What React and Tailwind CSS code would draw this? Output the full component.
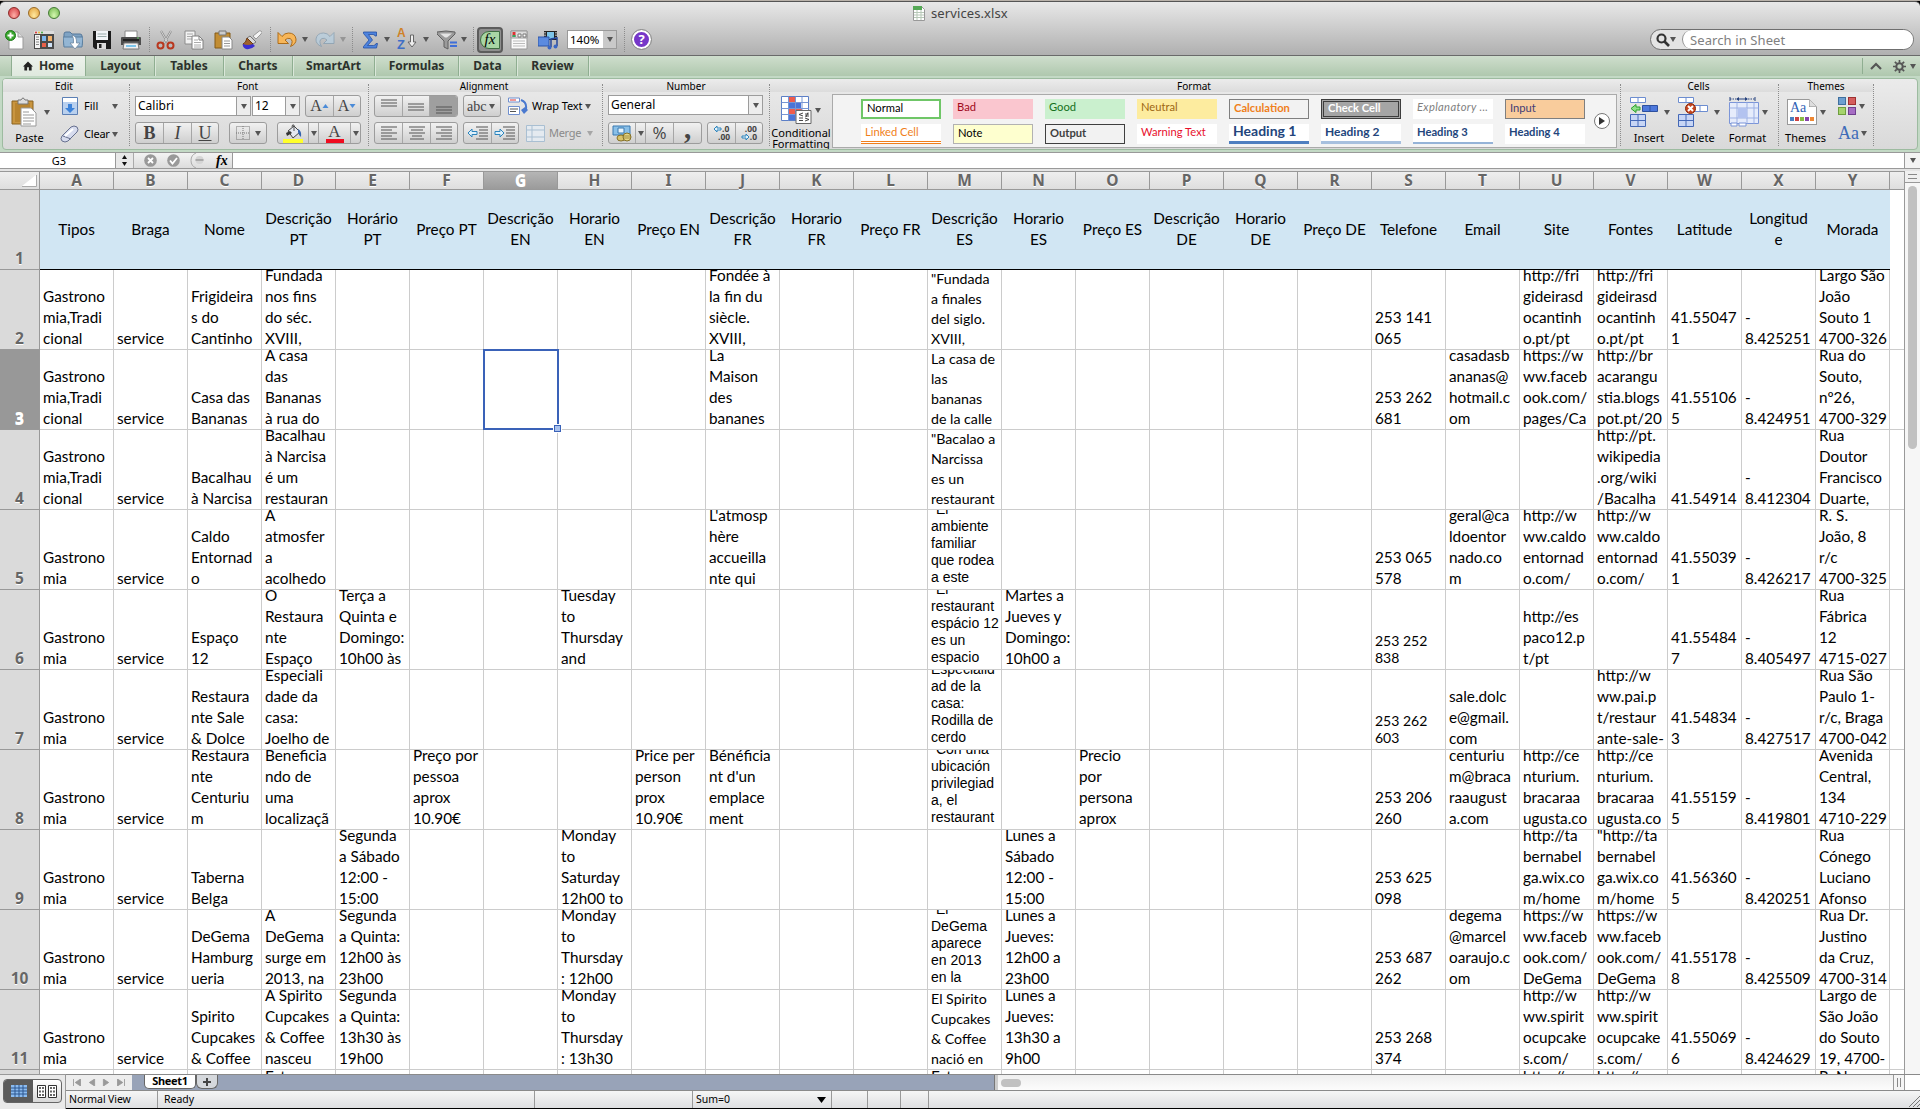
import React from "react";

const COLS = "ABCDEFGHIJKLMNOPQRSTUVWXY".split("");

const TITLES = [
  "Tipos", "Braga", "Nome", "Descrição|PT", "Horário|PT", "Preço PT", "Descrição|EN", "Horario|EN", "Preço EN",
  "Descrição|FR", "Horario|FR", "Preço FR", "Descrição|ES", "Horario|ES", "Preço ES", "Descrição|DE", "Horario|DE",
  "Preço DE", "Telefone", "Email", "Site", "Fontes", "Latitude", "Longitud|e", "Morada",
];

const ROWS = [
  {
    A: "Gastrono|mia,Tradi|cional", B: "service", C: "Frigideira|s do|Cantinho", D: "Fundada|nos fins|do séc.|XVIII,",
    J: "Fondée à|la fin du|siècle.|XVIII,", M: '"Fundada|a finales|del siglo.|XVIII,', S: "253 141|065",
    U: "http://fri|gideirasd|ocantinh|o.pt/pt", V: "http://fri|gideirasd|ocantinh|o.pt/pt", W: "41.55047|1", X: "-|8.425251",
    Y: "Largo São|João|Souto 1|4700-326",
  },
  {
    A: "Gastrono|mia,Tradi|cional", B: "service", C: "Casa das|Bananas", D: "A casa|das|Bananas|à rua do",
    J: "La|Maison|des|bananes", M: "La casa de|las|bananas|de la calle", S: "253 262|681", T: "casadasb|ananas@|hotmail.c|om",
    U: "https://w|ww.faceb|ook.com/|pages/Ca", V: "http://br|acarangu|stia.blogs|pot.pt/20", W: "41.55106|5", X: "-|8.424951",
    Y: "Rua do|Souto,|nº26,|4700-329",
  },
  {
    A: "Gastrono|mia,Tradi|cional", B: "service", C: "Bacalhau|à Narcisa", D: "Bacalhau|à Narcisa|é um|restauran",
    M: '"Bacalao a|Narcissa|es un|restaurant', V: "http://pt.|wikipedia|.org/wiki|/Bacalha", W: "41.54914", X: "-|8.412304",
    Y: "Rua|Doutor|Francisco|Duarte,",
  },
  {
    A: "Gastrono|mia", B: "service", C: "Caldo|Entornad|o", D: "A|atmosfer|a|acolhedo", J: "L'atmosp|hère|accueilla|nte qui",
    M: '"El|ambiente|familiar|que rodea|a este', S: "253 065|578", T: "geral@ca|ldoentor|nado.co|m",
    U: "http://w|ww.caldo|entornad|o.com/", V: "http://w|ww.caldo|entornad|o.com/", W: "41.55039|1", X: "-|8.426217",
    Y: "R. S.|João, 8|r/c|4700-325",
  },
  {
    A: "Gastrono|mia", B: "service", C: "Espaço|12", D: "O|Restaura|nte|Espaço", E: "Terça a|Quinta e|Domingo:|10h00 às",
    H: "Tuesday|to|Thursday|and", M: '"El|restaurant|espácio 12|es un|espacio', N: "Martes a|Jueves y|Domingo:|10h00 a",
    S: "253 252|838", U: "http://es|paco12.p|t/pt", W: "41.55484|7", X: "-|8.405497", Y: "Rua|Fábrica|12|4715-027",
  },
  {
    A: "Gastrono|mia", B: "service", C: "Restaura|nte Sale|& Dolce", D: "Especiali|dade da|casa:|Joelho de",
    M: "Especialid|ad de la|casa:|Rodilla de|cerdo", S: "253 262|603", T: "sale.dolc|e@gmail.|com",
    V: "http://w|ww.pai.p|t/restaur|ante-sale-", W: "41.54834|3", X: "-|8.427517", Y: "Rua São|Paulo 1-|r/c, Braga|4700-042",
  },
  {
    A: "Gastrono|mia", B: "service", C: "Restaura|nte|Centuriu|m", D: "Beneficia|ndo de|uma|localizaçã",
    F: "Preço por|pessoa|aprox|10.90€", I: "Price per|person|prox|10.90€", J: "Bénéficia|nt d'un|emplace|ment",
    M: '"Con una|ubicación|privilegiad|a, el|restaurant', O: "Precio|por|persona|aprox", S: "253 206|260",
    T: "centuriu|m@braca|raaugust|a.com", U: "http://ce|nturium.|bracaraa|ugusta.co", V: "http://ce|nturium.|bracaraa|ugusta.co",
    W: "41.55159|5", X: "-|8.419801", Y: "Avenida|Central,|134|4710-229",
  },
  {
    A: "Gastrono|mia", B: "service", C: "Taberna|Belga", E: "Segunda|a Sábado|12:00 -|15:00", H: "Monday|to|Saturday|12h00 to",
    N: "Lunes a|Sábado|12:00 -|15:00", S: "253 625|098", U: "http://ta|bernabel|ga.wix.co|m/home", V: '"http://ta|bernabel|ga.wix.co|m/home',
    W: "41.56360|5", X: "-|8.420251", Y: "Rua|Cónego|Luciano|Afonso",
  },
  {
    A: "Gastrono|mia", B: "service", C: "DeGema|Hamburg|ueria", D: "A|DeGema|surge em|2013, na", E: "Segunda|a Quinta:|12h00 às|23h00",
    H: "Monday|to|Thursday|: 12h00", M: '"El|DeGema|aparece|en 2013|en la', N: "Lunes a|Jueves:|12h00 a|23h00",
    S: "253 687|262", T: "degema|@marcel|oaraujo.c|om", U: "https://w|ww.faceb|ook.com/|DeGema", V: "https://w|ww.faceb|ook.com/|DeGema",
    W: "41.55178|8", X: "-|8.425509", Y: "Rua Dr.|Justino|da Cruz,|4700-314",
  },
  {
    A: "Gastrono|mia", B: "service", C: "Spirito|Cupcakes|& Coffee", D: "A Spirito|Cupcakes|& Coffee|nasceu", E: "Segunda|a Quinta:|13h30 às|19h00",
    H: "Monday|to|Thursday|: 13h30", M: "El Spirito|Cupcakes|& Coffee|nació en", N: "Lunes a|Jueves:|13h30 a|9h00",
    S: "253 268|374", U: "http://w|ww.spirit|ocupcake|s.com/", V: "http://w|ww.spirit|ocupcake|s.com/", W: "41.55069|6", X: "-|8.424629",
    Y: "Largo de|São João|do Souto|19, 4700-",
  },
];

const PEEK = { D: "Estamos", M: "Estamos", U: "http://w", V: "http://w", Y: "R. Nova" };

const CALIBRI = "font-['Lato',sans-serif] text-[15.3px] leading-[21px]";
const CALIBRI_SMALL = "font-['Lato',sans-serif] text-[14.2px] leading-[20px]";
const ARIAL = "font-['Liberation_Sans',Arial,sans-serif] text-[14px] leading-[17px] pb-[3px]";
const PHONE_SMALL = "font-['Lato',sans-serif] text-[14px] leading-[17px] pb-[3px]";

function cellFont(col, rowNo) {
  if (col === "M") return [5, 6, 7, 8, 10].includes(rowNo) ? ARIAL : CALIBRI_SMALL;
  if (col === "S" && (rowNo === 6 || rowNo === 7)) return PHONE_SMALL;
  return CALIBRI;
}

const Lines = ({ text }) => text.split("|").map((l, i) => <div key={i}>{l}</div>);

const Arrow = ({ className = "" }) => (
  <svg viewBox="0 0 6 5" className={"h-[5px] w-[6px] shrink-0 " + className}><path d="M0 0h6L3 5z" fill="#555" /></svg>
);
const Dots = ({ className = "" }) => <div className={"shrink-0 border-l border-dotted border-[#8c8c8c] " + className} />;
const Pic = ({ className = "", box = "0 0 20 20", children }) => (
  <svg viewBox={box} className={"shrink-0 " + className} fill="none">{children}</svg>
);

/* ---------- standard toolbar ---------- */

function Toolbar() {
  const s = "h-5 w-5 ";
  return (
    <div className="flex h-[31px] items-center">
      <Pic className={s + "ml-[5px]"}>
        <path d="M4 2h9l5 5v12H4z" fill="#fdfdfd" stroke="#999" /><path d="M13 2v5h5" fill="#ddd" stroke="#999" />
        <circle cx="5.5" cy="5.5" r="5" fill="#38a52c" stroke="#1d7a18" /><path d="M5.500 2.500v6M2.500 5.500h6" stroke="#fff" strokeWidth="2" />
      </Pic>
      <Pic className={s + "ml-[9px]"}>
        <path d="M0 1h20v18H0z" fill="#4a4a4a" /><path d="M0 1h20v3H0z" fill="#ddd" />
        <circle cx="2" cy="2.500" r="1" fill="#d33" /><circle cx="5" cy="2.500" r="1" fill="#eb3" /><circle cx="8" cy="2.500" r="1" fill="#4a4" />
        <path d="M1 5h5v13H1z" fill="#f4f4f4" /><path d="M2 7h3M2 9.500h3M2 12h3M2 14.500h3" stroke="#888" />
        <path d="M8 6h4v5H8z" fill="#7db8f0" /><path d="M14 6h4v5h-4z" fill="#f3b26b" /><path d="M8 13h4v4H8z" fill="#e9604a" /><path d="M14 13h4v4h-4z" fill="#cfe3f8" />
      </Pic>
      <Pic className={s + "ml-[9px]"}>
        <path d="M1 4q0-2 2-2h4l2 2h8q2 0 2 2v9H1z" fill="#7fa3c4" stroke="#56789a" /><path d="M0 7h20l-1 10H1z" fill="#94b6d4" stroke="#5b7f9f" />
        <path d="M9 5q5 1 4.500 8H17l-5 6-5-6h3.500Q11 8 9 5z" fill="#fff" stroke="#6d87a0" strokeWidth=".8" />
      </Pic>
      <Pic className={s + "ml-[9px]"}>
        <path d="M1 1h18v18H3l-2-2z" fill="#1b1b1b" /><path d="M4 1h12v9H4z" fill="#f3f5f8" /><path d="M5.500 4h9M5.500 6.500h9" stroke="#9aa" />
        <path d="M5 13h9v6H5z" fill="#dcdcdc" /><path d="M7 14h2.500v4H7z" fill="#222" />
      </Pic>
      <Pic className={s + "ml-[9px]"}>
        <path d="M4 1h12v8H4z" fill="#fff" stroke="#888" /><path d="M0 8q0-1 1-1h18q1 0 1 1v7H0z" fill="#4d4d4d" /><path d="M2 9h16v2H2z" fill="#222" />
        <path d="M3 13h14l1 6H2z" fill="#f1f1f1" stroke="#777" /><path d="M5 16h10" stroke="#56b6e8" strokeWidth="1.500" /><circle cx="17" cy="8" r=".8" fill="#6d6" />
      </Pic>
      <Dots className="ml-[8px] h-[25px]" />
      <Pic className={s + "ml-[6px]"}>
        <path d="M5 1l7.500 13M15 1L7.500 14" stroke="#888" strokeWidth="2.200" /><path d="M5 1l7.500 13M15 1L7.500 14" stroke="#e9e9e9" strokeWidth=".8" />
        <circle cx="4.500" cy="15.500" r="3" stroke="#b9381f" strokeWidth="2" /><circle cx="14.500" cy="15.500" r="3" stroke="#b9381f" strokeWidth="2" />
      </Pic>
      <Pic className={s + "ml-[8px]"}>
        <path d="M1 1h10v13H1z" fill="#f2f2f2" stroke="#8c8c8c" /><path d="M3 4h6M3 6.500h6M3 9h6" stroke="#aaa" />
        <path d="M8 6h7l4 4v9H8z" fill="#fff" stroke="#808080" /><path d="M10 10h4M10 12.500h7M10 15h7M10 17h7" stroke="#aaa" /><path d="M15 6v4h4" stroke="#808080" />
      </Pic>
      <Pic className={s + "ml-[10px]"}>
        <path d="M1 3h15v15H1z" fill="#c28d33" stroke="#845b17" /><path d="M5 1h7v4H5z" fill="#ccc" stroke="#777" />
        <path d="M8 7h7l3 3v9H8z" fill="#fff" stroke="#888" /><path d="M10 11h6M10 13.500h6M10 16h6" stroke="#999" />
      </Pic>
      <Pic className={s + "ml-[8px]"}>
        <path d="M19 1q2 1 0 3l-5 5-3-3 5-4q2-2 3-1z" fill="#f4f4f4" stroke="#999" /><path d="M8 6l6 6-3 2-6-6z" fill="#d9d9d9" stroke="#777" />
        <path d="M5 8l6 6q-3 4-7 2-3 0-3-2 3-1 4-6z" fill="#a0622b" stroke="#6b3a12" /><path d="M1 14q5 2 10 0l2 2q-4 4-9 3-4-2-3-5z" fill="#3a2fd0" />
      </Pic>
      <Dots className="ml-[8px] h-[25px]" />
      <Pic className={s + "ml-[6px]"}>
        <path d="M1 2.500v11h10.500L8 10q2.500-2.500 5-1.500 4 2 .5 8 6-2.500 5.500-7.500Q18 3 11.500 3 7.500 3 5 6.500z" fill="#f7b659" stroke="#a8640e" strokeWidth=".9" />
      </Pic>
      <Arrow className="ml-[5px]" />
      <Pic className={s + "ml-[7px] opacity-60"}>
        <path d="M19 2.500v11H8.500L12 10q-2.500-2.500-5-1.500-4 2-.5 8Q.5 14 1 9 2 3 8.500 3q4 0 6.500 3.500z" fill="#b6d3e8" stroke="#7292ac" strokeWidth=".9" />
      </Pic>
      <Arrow className="ml-[5px] opacity-40" />
      <Dots className="ml-[6px] h-[25px]" />
      <Pic className={s + "ml-[7px]"}>
        <path d="M3.500 2h13v4h-1.500q0-1.500-2-1.500H8.500L12.500 10l-5 5.500h6q2 0 2.500-2h1.500l-1 4.500H3.500v-1.500L9 10 3.500 3.500z" fill="#4e83dd" stroke="#2450a4" strokeWidth=".8" />
      </Pic>
      <Arrow className="ml-[4px]" />
      <div className="relative ml-[7px] h-5 w-5">
        <div className="absolute -top-[3px] left-0 font-['Liberation_Sans'] text-[12px] font-bold leading-[13px] text-[#cf8128]">A</div>
        <div className="absolute top-[8px] left-0 font-['Liberation_Sans'] text-[13px] font-bold leading-[13px] text-[#3f6fc6]">Z</div>
        <svg viewBox="0 0 10 14" className="absolute top-[4px] right-0 h-[14px] w-[10px]"><path d="M3.500 1h3v7H9l-4 5-4-5h2.500z" fill="#eee" stroke="#666" /></svg>
      </div>
      <Arrow className="ml-[6px]" />
      <Pic className={s + "ml-[8px]"}>
        <path d="M0 2q9-2 18 0v2l-7 7v8l-4-2v-6L0 4z" fill="#9b9b9b" stroke="#606060" /><path d="M3 3.500h12l-5 4H8z" fill="#e4e4e4" /><path d="M13 12.500h7M13 16h7" stroke="#3f6fd8" strokeWidth="2" />
      </Pic>
      <Arrow className="ml-[4px]" />
      <Dots className="ml-[6px] h-[25px]" />
      <div className="ml-[3px] flex h-[26px] w-[26px] shrink-0 items-center justify-center rounded-[4px] border-2 border-[#5c5c5c] bg-[#8f8f8f]">
        <div className="flex h-[18px] w-[20px] items-center justify-center rounded-l-full rounded-r-[2px] border border-[#3f6d42] bg-[#a9d6a5] font-['Liberation_Serif'] text-[15px] italic leading-none text-black">fx</div>
      </div>
      <Pic className={s + "ml-[6px]"}>
        <path d="M2 1h16v18H2z" fill="#fafafa" stroke="#999" /><path d="M2 1h16v7H2z" fill="#ddd" stroke="#999" /><path d="M3.500 2h3v5h-3z" fill="#d33" /><path d="M3.500 5h3v2h-3z" fill="#3a6" />
        <path d="M9 4h3v3H9zM14 4h3v3h-3z" fill="#fff" stroke="#777" /><path d="M4 11h12M4 13.500h12M4 16h12" stroke="#bbb" />
      </Pic>
      <Pic className={s + "ml-[9px]"}>
        <path d="M6 1h13v9H6z" fill="#222" /><path d="M9 2h7v7H9z" fill="#7dc4e8" /><path d="M7 2v7M18 2v7" stroke="#fff" strokeDasharray="1.500 1" />
        <path d="M0 7h11v9H0z" fill="#5b8be0" stroke="#2c55a8" /><path d="M13 17V9l6-1v8" stroke="#24479b" strokeWidth="1.500" /><circle cx="11.500" cy="17.500" r="2" fill="#3966c4" /><circle cx="17.500" cy="16.500" r="2" fill="#3966c4" />
      </Pic>
      <div className="ml-[9px] flex h-[19px] w-[50px] shrink-0 border border-[#9a9a9a] bg-white">
        <div className="w-[35px] pl-[2px] text-[11.5px] leading-[18px] text-black">140%</div>
        <div className="flex flex-1 items-center justify-center bg-[#c9c9c9]"><Arrow /></div>
      </div>
      <Dots className="ml-[7px] h-[25px]" />
      <div className="ml-[7px] flex h-[19px] w-[19px] shrink-0 items-center justify-center rounded-full border-2 border-white bg-[#7637c8] text-[13px] font-bold leading-none text-white outline outline-[#8a8a8a]">?</div>
      <div className="ml-auto mr-[6px] flex h-[21px] w-[264px] shrink-0 rounded-full border border-[#6f6f6f] bg-[#e4e4e4]">
        <div className="flex w-[31px] items-center pl-[5px]">
          <Pic className="h-[14px] w-[14px]" box="0 0 14 14"><circle cx="5.500" cy="5.500" r="4" stroke="#333" strokeWidth="2.200" /><path d="M8.500 8.500l4.500 4.500" stroke="#333" strokeWidth="2.600" /></Pic>
          <Arrow />
        </div>
        <div className="flex-1 rounded-full border-l border-[#8f8f8f] bg-white pl-[7px] text-[13px] leading-[20px] tracking-[0.1px] text-[#808080]">Search in Sheet</div>
      </div>
    </div>
  );
}

/* ---------- ribbon ---------- */

const TABS = [
  ["Layout", "w-[69px] tracking-[-0.1px] pl-[1px]"], ["Tables", "w-[69px]"], ["Charts", "w-[69px]"], ["SmartArt", "w-[82px]"],
  ["Formulas", "w-[84px]"], ["Data", "w-[58px]"], ["Review", "w-[72px]"],
];

function Tabs() {
  return (
    <div className="flex h-[20px] bg-gradient-to-b from-[#cfdecd] to-[#afc8ae] text-[12px] font-bold leading-[20px] text-[#2c322c]">
      <div className="w-[12px] border-r border-[#8fae91]" />
      <div className="flex w-[74px] items-center border-r border-[#8fae91] bg-gradient-to-b from-[#eef3ed] to-[#dfe9de] pl-[11px]">
        <Pic className="mr-[6px] h-[10px] w-[10px]" box="0 0 11 10"><path d="M5.500 0L11 5.500H9.500V10h-3V6.500h-2V10h-3V5.500H0z" fill="#222" /></Pic><span className="tracking-[-0.2px]">Home</span>
      </div>
      {TABS.map(([t, w]) => <div key={t} className={"border-r border-[#8fae91] text-center shadow-[1px_0_0_#dbe7da] " + w}>{t}</div>)}
      <div className="ml-auto flex items-center">
        <div className="h-[16px] border-l border-[#8fae91]" />
        <Pic className="ml-[7px] h-[8px] w-[12px]" box="0 0 12 8"><path d="M1 7l5-5 5 5" stroke="#555" strokeWidth="2.200" /></Pic>
        <Pic className="ml-[11px] h-[13px] w-[13px]" box="0 0 14 14">
          <circle cx="7" cy="7" r="3.500" stroke="#555" strokeWidth="2.200" /><path d="M7 0v3M7 11v3M0 7h3M11 7h3M2 2l2 2M10 10l2 2M12 2l-2 2M4 10l-2 2" stroke="#555" strokeWidth="1.800" />
        </Pic>
        <Arrow className="ml-[4px] mr-[4px]" />
      </div>
    </div>
  );
}

const Group = ({ title, className, children }) => (
  <div className={"flex shrink-0 flex-col " + className}>
    <div className="h-[13px] bg-gradient-to-b from-[#ececec] to-[#dcdcdc] text-center text-[10px] leading-[14px] text-black">{title}</div>
    {children}
  </div>
);
const Sep = () => <Dots className="mt-[5px] h-[62px]" />;
const BTN = "flex h-[22px] shrink-0 items-center rounded-[3px] border border-[#9c9c9c] bg-gradient-to-b from-[#f1f1f1] to-[#cfcfcf] text-[#444]";
const SEG = "flex h-full shrink-0 items-center justify-center border-l border-[#a6a6a6] ";

const Align = ({ kind }) => {
  const shapes = {
    top: "M4 2h16M4 5h16M4 8h16", mid: "M4 6h16M4 9h16M4 12h16", bot: "M4 9h16M4 12h16M4 15h16",
    left: "M4 2h16M4 5h11M4 8h16M4 11h11M4 14h16", center: "M4 2h16M6 5h12M4 8h16M7 11h10M5 14h14", right: "M4 2h16M9 5h11M4 8h16M9 11h11M4 14h16",
  };
  return <Pic className="h-[16px] w-[24px]" box="0 0 24 16"><path d={shapes[kind]} stroke="#555" strokeWidth="1.200" /></Pic>;
};

const Indent = ({ out }) => (
  <Pic className="h-[14px] w-[22px]" box="0 0 22 14">
    <path d="M9 1h12M12 4h9M12 7h9M12 10h9M9 13h12" stroke="#555" strokeWidth="1.200" />
    <path d={out ? "M1 7l4-4v2.500h5v3H5V11z" : "M10 7L6 3v2.500H1v3h5V11z"} fill="#dff1fb" stroke="#2c84bd" />
  </Pic>
);

const Select = ({ text, className, arrow }) => (
  <div className={"flex h-[20px] shrink-0 border border-[#9c9c9c] bg-white text-[12px] leading-[18px] text-black " + className}>
    <div className="flex-1 pl-[2px]">{text}</div>
    <div className={"flex items-center justify-center border-l border-[#9c9c9c] bg-[#ededed] " + arrow}><Arrow /></div>
  </div>
);

const EditGroup = () => (
  <Group title={<span className="-ml-[4px]">Edit</span>} className="w-[126px]">
    <div className="flex">
      <div className="w-[54px] pl-[8px] pt-[5px]">
        <div className="flex items-center">
          <Pic className="h-[30px] w-[26px]" box="0 0 26 30">
            <path d="M1 4h21v23H1z" fill="#c9953f" stroke="#8a621e" /><path d="M4 6h15v19H4z" fill="#b8842f" /><path d="M7 3h3q2-4 4 0h3v4H7z" fill="#ddd" stroke="#777" />
            <path d="M10 11h10l5 5v13H10z" fill="#fff" stroke="#999" /><path d="M12 15h6M12 18h11M12 21h11M12 24h11M12 27h8" stroke="#999" />
          </Pic>
          <Arrow className="ml-[7px]" />
        </div>
        <div className="mt-[3px] w-[37px] text-center text-[11px] leading-[16px]">Paste</div>
      </div>
      <div className="pt-[3px] text-[11px]">
        <div className="flex h-[22px] items-center">
          <Pic className="ml-[5px] h-[18px] w-[16px]" box="0 0 16 18"><path d="M.5.5h15v17H.5z" fill="#b9d0ee" stroke="#5b7fb5" /><path d="M1 1h14v4H1z" fill="#fff" /><path d="M6 7h4v4h3l-5 5-5-5h3z" fill="#3d82d8" /></Pic>
          <div className="ml-[6px] w-[28px]">Fill</div><Arrow />
        </div>
        <div className="mt-[6px] flex h-[22px] items-center">
          <Pic className="ml-[3px] h-[18px] w-[19px]" box="0 0 19 18"><path d="M2 11L11 2q3-2 6 0 2 3 0 5L8 16q-3 2-6 0-2-2 0-5z" fill="#d7dcee" stroke="#66708f" /><path d="M3 11l8 3" stroke="#66708f" /><path d="M5 11l8-7" stroke="#fff" strokeWidth="2" /></Pic>
          <div className="ml-[5px] w-[28px] tracking-[-0.2px]">Clear</div><Arrow />
        </div>
      </div>
    </div>
  </Group>
);

const FontGroup = () => (
  <Group title={<span className="-ml-[3px]">Font</span>} className="w-[238px]">
    <div className="mt-[4px] flex h-[20px] items-center pl-[5px]">
      <Select text="Calibri" className="w-[116px]" arrow="w-[14px]" />
      <Select text="12" className="ml-[1px] w-[48px]" arrow="w-[14px]" />
      <div className={BTN + " ml-[5px] w-[56px] font-['Liberation_Serif'] text-[16px]"}>
        <div className="flex w-[27px] items-center justify-center">A<svg viewBox="0 0 6 4" className="h-[4px] w-[7px]"><path d="M0 4h6L3 0z" fill="#4a8bd8" /></svg></div>
        <div className={SEG + "w-[27px]"}>A<svg viewBox="0 0 6 4" className="h-[4px] w-[7px]"><path d="M0 0h6L3 4z" fill="#4a8bd8" /></svg></div>
      </div>
    </div>
    <div className="mt-[6px] flex items-center pl-[5px]">
      <div className={BTN + " w-[84px] font-['Liberation_Serif'] text-[18px]"}>
        <div className="w-[27px] text-center font-bold">B</div><div className={SEG + "w-[28px] italic"}>I</div><div className={SEG + "w-[27px] underline"}>U</div>
      </div>
      <div className={BTN + " ml-[10px] w-[38px]"}>
        <Pic className="ml-[6px] h-[14px] w-[14px]" box="0 0 14 14"><path d="M.5.5h13v13H.5zM7 0v14M0 7h14" stroke="#777" strokeDasharray="1 1" /></Pic><Arrow className="ml-[5px]" />
      </div>
      <div className={BTN + " ml-[10px] w-[84px]"}>
        <div className="flex w-[30px] justify-center">
          <Pic className="h-[19px] w-[20px]" box="0 0 20 19"><path d="M0 15h20v4H0z" fill="#ffff2a" /><path d="M5 7l6-5 6 6-7 6z" fill="#e4e8f0" stroke="#444" /><path d="M11 7V1q-2-1-2 2" stroke="#555" /><path d="M15 5q4 2 3 8-2-1-3-5z" fill="#3463ad" /><path d="M3 9l4-2 2 2-5 3z" fill="#333" /></Pic>
        </div>
        <div className={SEG + "w-[10px]"}><Arrow /></div>
        <div className={SEG + "w-[32px]"}>
          <div className="flex h-[19px] w-[18px] flex-col items-center border-b-4 border-[#f00c20] font-['Liberation_Serif'] text-[17px] leading-[15px]">A</div>
        </div>
        <div className={SEG + "w-[10px]"}><Arrow /></div>
      </div>
    </div>
  </Group>
);

const AlignmentGroup = () => (
  <Group title={<span className="-ml-[3px]">Alignment</span>} className="w-[233px]">
    <div className="mt-[3px] flex h-[22px] items-center pl-[5px]">
      <div className={BTN + " w-[84px] overflow-hidden"}>
        <div className="flex w-[27px] justify-center"><Align kind="top" /></div><div className={SEG + "w-[27px]"}><Align kind="mid" /></div>
        <div className={SEG + "w-[28px] bg-[#9f9f9f]"}><Align kind="bot" /></div>
      </div>
      <div className={BTN + " ml-[5px] w-[38px] pl-[3px] font-['Liberation_Serif'] text-[14px]"}>abc<Arrow className="ml-[3px]" /></div>
      <Pic className="ml-[7px] h-[18px] w-[20px]" box="0 0 20 18">
        <path d="M.5 1h11v4H.5zM.5 9.500h11v8H.5z" fill="#fff" stroke="#6f8fce" /><path d="M2 3h6" stroke="#d33" /><path d="M2 12h8M2 14.500h6" stroke="#555" /><path d="M13 3q6 2 5 9" stroke="#4a79cf" strokeWidth="2" /><path d="M13 13l4-3 3 3-4 4z" fill="#4a79cf" />
      </Pic>
      <div className="ml-[4px] w-[52px] whitespace-nowrap text-[11px] tracking-[-0.1px]">Wrap Text</div><Arrow className="ml-[1px]" />
    </div>
    <div className="mt-[5px] flex items-center pl-[5px]">
      <div className={BTN + " w-[84px]"}>
        <div className="flex w-[27px] justify-center"><Align kind="left" /></div><div className={SEG + "w-[28px]"}><Align kind="center" /></div><div className={SEG + "w-[27px]"}><Align kind="right" /></div>
      </div>
      <div className={BTN + " ml-[5px] w-[56px]"}>
        <div className="flex w-[27px] justify-center"><Indent out /></div><div className={SEG + "w-[27px]"}><Indent /></div>
      </div>
      <Pic className="ml-[7px] h-[17px] w-[19px]" box="0 0 19 17"><path d="M.5.5h18v16H.5zM.5 5h18M.5 12h18M6 .5v16" fill="#e4eaf0" stroke="#a9bfd2" /></Pic>
      <div className="ml-[4px] w-[36px] text-[11px] tracking-[-0.3px] text-[#8a8a8a]">Merge</div><Arrow className="ml-[2px] opacity-40" />
    </div>
  </Group>
);

const NumberGroup = () => (
  <Group title="Number" className="w-[166px]">
    <div className="mt-[3px] pl-[5px]"><Select text="General" className="w-[155px]" arrow="w-[14px]" /></div>
    <div className="mt-[7px] flex pl-[5px]">
      <div className={BTN + " w-[94px]"}>
        <div className="flex w-[26px] justify-center">
          <Pic className="h-[17px] w-[20px]" box="0 0 20 17"><path d="M1 1h17v9H1z" fill="#8ac0e8" stroke="#3878b0" /><path d="M6 3h6v5H6z" fill="#e8f4fb" stroke="#3878b0" /><ellipse cx="9" cy="13" rx="4" ry="3" fill="#d8c26a" stroke="#857026" /><ellipse cx="15" cy="12" rx="4" ry="4" fill="#e6d685" stroke="#857026" /><path d="M11 11h8M11 13h8" stroke="#857026" strokeWidth=".7" /></Pic>
        </div>
        <div className={SEG + "w-[10px]"}><Arrow /></div><div className={SEG + "w-[28px] font-['Open_Sans'] text-[17px]"}>%</div>
        <div className={SEG + "w-[28px] pb-[9px] font-['Liberation_Serif'] text-[29px] font-bold leading-none"}>,</div>
      </div>
      <div className={BTN + " ml-[5px] w-[56px] text-[8.5px] font-bold leading-[8px]"}>
        <div className="w-[27px] pl-[5px]"><div className="flex"><Pic className="h-[8px] w-[9px]" box="0 0 9 8"><path d="M1 4l3-3v2h4v2H4v2z" fill="#e3f3fb" stroke="#2c84bd" /></Pic>.0</div><div className="pl-[5px]">.00</div></div>
        <div className={SEG + "w-[27px]"}><div><div className="pl-[4px]">.00</div><div className="flex"><Pic className="h-[8px] w-[9px]" box="0 0 9 8"><path d="M8 4L5 1v2H1v2h4v2z" fill="#e3f3fb" stroke="#2c84bd" /></Pic>.0</div></div></div>
      </div>
    </div>
  </Group>
);

const STYLES = [
  ["Normal", "border-2 border-[#6fc667] bg-white text-black pl-[3px] !leading-[13px]"],
  ["Bad", "bg-[#fac6cf] text-[#a00a20]"],
  ["Good", "bg-[#caf0ce] text-[#15721d]"],
  ["Neutral", "bg-[#fdec9f] text-[#9d6712]"],
  ["Calculation", "border border-[#7f7f7f] bg-[#f2f2f2] font-bold text-[#f07f1b] pl-[3px]"],
  ["Check Cell", "border-[3px] border-double border-[#3d3d3d] bg-[#a5a5a5] font-bold text-white pl-[1px] !leading-[11px]"],
  ["Explanatory ...", "bg-white italic tracking-[0.35px] text-[#7f7f7f]"],
  ["Input", "border border-[#7f7f7f] bg-[#f9cc9c] text-[#443c76] pl-[3px]"],
  ["Linked Cell", "border-b-[3px] border-double border-[#f07f1b] bg-white text-[#f07f1b]"],
  ["Note", "border border-[#b2b2b2] bg-[#feffcf] text-black pl-[3px]"],
  ["Output", "border border-[#3f3f3f] bg-[#f2f2f2] font-bold text-[#3f3f3f] pl-[3px]"],
  ["Warning Text", "bg-white text-[#e8112d]"],
  ["Heading 1", "border-b-[3px] border-[#4f7fc0] bg-white text-[14px] font-bold text-[#23457c] !leading-[14px]"],
  ["Heading 2", "border-b-[3px] border-[#a7c0de] bg-white text-[12px] font-bold text-[#23457c]"],
  ["Heading 3", "border-b-2 border-[#95b3d7] bg-white font-bold text-[#23457c]"],
  ["Heading 4", "bg-white font-bold text-[#23457c]"],
];

const FormatGroup = () => (
  <Group title={<span className="-ml-[2px]">Format</span>} className="w-[850px]">
    <div className="flex">
      <div className="w-[62px] pt-[4px]">
        <div className="flex items-center pl-[11px]">
          <Pic className="h-[28px] w-[31px]" box="0 0 31 28">
            <path d="M.5.5h27v24H.5z" fill="#fff" stroke="#5c7fc6" /><path d="M8 1h6v5H8z" fill="#ee5c4c" /><path d="M8 7h12v5H8z" fill="#4a74d8" /><path d="M8 13h13v5H8z" fill="#ee5c4c" /><path d="M8 19h6v5H8z" fill="#4a74d8" />
            <path d="M.5 6.500h27M.5 12.500h27M.5 18.500h27M7.500.5v24M14.500.5v24M21 .5v24" stroke="#7896d4" /><path d="M15 14.500h15v13H15z" fill="#fff" stroke="#666" />
            <path d="M22 17l-4 1.500 4 1.500M18 22h4M24 18h4M24 20h4M27 16.500l-2 4.500M18 24.500h4M24 22l4 1.500-4 1.500" stroke="#333" strokeWidth=".9" />
          </Pic>
          <Arrow className="ml-[3px]" />
        </div>
        <div className="mt-[3px] w-[62px] text-center text-[11px] leading-[11px]">Conditional<br />Formatting</div>
      </div>
      <div className="mt-[2px] flex h-[54px] w-[785px] items-center border border-[#aaa] bg-[#f3f3f3]">
        <div className="ml-[28px] grid grid-cols-[repeat(8,80px)] gap-x-[12px] gap-y-[5px] font-['Lato',sans-serif]">
          {STYLES.map(([n, c]) => <div key={n} className={"h-[20px] whitespace-nowrap pl-[4px] text-[11.2px] leading-[15px] " + c}>{n}</div>)}
        </div>
        <div className="ml-[9px] flex h-[16px] w-[16px] items-center justify-center rounded-full border border-[#777] bg-white"><Pic className="h-[8px] w-[6px]" box="0 0 6 8"><path d="M0 0l6 4-6 4z" fill="#333" /></Pic></div>
      </div>
    </div>
  </Group>
);

const BigButton = ({ label, children, className }) => (
  <div className={"shrink-0 " + className}>
    <div className="flex h-[30px] items-center">{children}<Arrow className="ml-auto" /></div>
    <div className="mt-[3px] text-center text-[11px] leading-[16px]"><span className="-ml-[2px]">{label}</span></div>
  </div>
);

const CellsGroup = () => (
  <Group title={<span className="-ml-[2px]">Cells</span>} className="w-[157px]">
    <div className="flex pt-[5px] pl-[9px]">
      <BigButton label="Insert" className="w-[40px]">
        <Pic className="h-[30px] w-[28px]" box="0 0 28 30">
          <path d="M.5.5h15v5H.5zM8 .5v5" fill="#fff" stroke="#6c8dd0" /><path d="M12.500 8.500h15v6h-15zM20 8.500v6" fill="#4d78dc" stroke="#2d509e" />
          <path d="M1 11.500l5-4v2.500h4v3H6v2.500z" fill="#8fe08a" stroke="#2aa02a" /><path d="M.5 17.500h15v12H.5zM.5 23.500h15M8 17.500v12" fill="#c8d6f5" stroke="#4468b6" />
        </Pic>
      </BigButton>
      <BigButton label="Delete" className="ml-[8px] w-[42px]">
        <Pic className="h-[30px] w-[30px]" box="0 0 30 30">
          <path d="M.5.5h15v5H.5zM8 .5v5M14.500 8.500h15v6h-15zM22 8.500v6" fill="#fff" stroke="#6c8dd0" /><path d="M.5 17.500h15v12H.5zM.5 23.500h15M8 17.500v12" fill="#c8d6f5" stroke="#4468b6" />
          <circle cx="12.500" cy="11.500" r="5" fill="#c8451e" stroke="#8a2a0c" /><path d="M10 9l5 5M15 9l-5 5" stroke="#fff" strokeWidth="2" />
        </Pic>
      </BigButton>
      <BigButton label="Format" className="ml-[9px] w-[39px]">
        <Pic className="h-[30px] w-[30px]" box="0 0 30 30">
          <path d="M1 0v4M26 0v4M8 2h10" stroke="#26427e" /><path d="M7 2l3-2v4zM19 2l-3-2v4z" fill="#26427e" /><path d="M1 2h6M19 2h7" stroke="#26427e" strokeDasharray="1.500 1" />
          <path d="M.5 5.500h29v21H.5z" fill="#e6ecfb" stroke="#7b95d8" /><path d="M.5 11h29M.5 21h29M8 5.500v21M18 5.500v21M25 5.500v21" stroke="#9db1e4" /><path d="M9 11h9v10H9z" fill="#b3c3f0" /><path d="M2 26h6v3H2zM10 26h7v3h-7z" fill="#fff" stroke="#7b95d8" />
        </Pic>
      </BigButton>
    </div>
  </Group>
);

const ThemesGroup = () => (
  <Group title="Themes" className="w-[94px]">
    <div className="flex pt-[5px] pl-[8px]">
      <BigButton label="Themes" className="w-[39px]">
        <div className="relative h-[26px] w-[30px] border border-[#999] bg-white pl-[2px] font-['Liberation_Serif'] text-[14px] leading-[15px] text-[#2f62b5]">Aa
          <div className="mt-[2px] flex gap-px">
            <i className="h-[4px] w-[4px] bg-[#4a7fc0]" /><i className="h-[4px] w-[4px] bg-[#c44]" /><i className="h-[4px] w-[4px] bg-[#8b4]" /><i className="h-[4px] w-[4px] bg-[#84a]" /><i className="h-[4px] w-[4px] bg-[#e83]" />
          </div>
          <svg viewBox="0 0 8 8" className="absolute -top-px -right-px h-[8px] w-[8px]"><path d="M0 0v8h8z" fill="#ddd" stroke="#888" /><path d="M0 0h8v8z" fill="#e4e4e4" /></svg>
        </div>
      </BigButton>
      <div className="ml-[12px]">
        <div className="flex items-center">
          <div className="grid grid-cols-[8px_8px] gap-[2px]">
            <i className="h-[8px] border border-[#3f6f9e] bg-[#6d9fd0]" /><i className="h-[8px] border border-[#9e3030] bg-[#d45d5d]" /><i className="h-[8px] border border-[#6f9e3f] bg-[#a6d46d]" /><i className="h-[8px] border border-[#6f3f8e] bg-[#a66dc4]" />
          </div>
          <Arrow className="ml-[3px]" />
        </div>
        <div className="mt-[8px] flex items-center font-['Liberation_Serif'] text-[18px] leading-[20px] text-[#3e6cb8]">Aa<Arrow className="ml-[2px]" /></div>
      </div>
    </div>
  </Group>
);

function Ribbon() {
  return (
    <div className="h-[76px] bg-[#c3d9c5] px-[2px] pt-[2px] pb-[2px]">
      <div className="flex h-[72px] overflow-hidden rounded-[4px] border border-[#9dbba0] bg-gradient-to-b from-[#ebebeb] to-[#d9d9d9] text-black">
        <EditGroup /><Sep /><FontGroup /><Sep /><AlignmentGroup /><Sep /><NumberGroup /><Sep /><FormatGroup /><Sep /><CellsGroup /><Sep /><ThemesGroup /><Sep />
      </div>
    </div>
  );
}

function FormulaBar() {
  return (
    <div className="flex h-[17px] border-y border-[#999] bg-[#e8e8e8] text-[11px] leading-[15px] text-black">
      <div className="w-[116px] border-r border-[#999] bg-white pl-[3px] text-center">G3</div>
      <div className="flex w-[18px] items-center justify-center border-r border-[#aaa]"><Pic className="h-[11px] w-[5px]" box="0 0 5 11"><path d="M0 4h5L2.500 0zM0 7h5l-2.500 4z" fill="#111" /></Pic></div>
      <div className="flex w-[99px] items-center border-r border-[#999] bg-gradient-to-b from-[#f3f3f3] to-[#dcdcdc]">
        <Pic className="ml-[10px] h-[13px] w-[13px]" box="0 0 13 13"><circle cx="6.500" cy="6.500" r="6.300" fill="#999" /><path d="M4 4l5 5M9 4L4 9" stroke="#fff" strokeWidth="1.800" /></Pic>
        <Pic className="ml-[10px] h-[13px] w-[13px]" box="0 0 13 13"><circle cx="6.500" cy="6.500" r="6.300" fill="#999" /><path d="M3 6.500l2.500 3L10 4" stroke="#fff" strokeWidth="1.800" /></Pic>
        <Pic className="ml-[10px] h-[15px] w-[15px]" box="0 0 15 15"><path d="M6 0Q1 2 1 7.500T6 15" stroke="#aaa" /><circle cx="9.500" cy="7" r="4" fill="#d5d5d5" /><path d="M5.500 7h8" stroke="#aaa" strokeWidth="2" /></Pic>
        <div className="ml-[11px] font-['Liberation_Serif'] text-[14px] font-bold italic leading-none">fx</div>
      </div>
      <div className="flex-1 bg-white" />
      <div className="flex w-[16px] items-center justify-center border-l border-[#999] bg-[#f3f3f3]"><Arrow /></div>
    </div>
  );
}

/* ---------- sheet ---------- */

const HEAD = "font-['Noto_Sans',sans-serif] font-bold text-[15.5px] [text-shadow:0_1px_0_#fff]";

function Sheet() {
  return (
    <div className="flex h-[903px] bg-white">
      <div className="flex w-[1904px] flex-col overflow-hidden">
        <div className="flex h-[19px] shrink-0 border-y border-[#999] bg-gradient-to-b from-[#efefef] to-[#dedede]">
          <div className="flex w-[40px] shrink-0 items-center justify-end border-r border-[#999] pr-[2px]"><Pic className="h-[12px] w-[15px]" box="0 0 15 12"><path d="M0 11L14 0v11z" fill="#fff" /><path d="M0 11.500h14.500V0" stroke="#aaa" /></Pic></div>
          {COLS.map((c) => (
            <div key={c} className={"w-[74px] shrink-0 border-r border-[#999] text-center leading-[17px] " + HEAD + (c === "G" ? " bg-gradient-to-b from-[#b5b5b5] to-[#9b9b9b] text-white [text-shadow:0_0_1px_#555]" : " text-[#666]")}>{c}</div>
          ))}
        </div>
        <div className="flex h-[80px] shrink-0">
          <RowHead n={1} />
          {TITLES.map((t, i) => (
            <div key={i} className={"flex w-[74px] shrink-0 flex-col justify-center whitespace-nowrap border-b border-black bg-[#d1e6f3] pr-[1px] pb-[1px] text-center text-black " + CALIBRI}><Lines text={t} /></div>
          ))}
        </div>
        {ROWS.map((r, i) => <Row key={i} n={i + 2} data={r} />)}
        <div className="flex h-[4px] shrink-0 overflow-hidden">
          <div className="w-[40px] shrink-0 border-r border-[#999] bg-[#dadada]" />
          {COLS.map((c) => <div key={c} className={"h-[4px] w-[74px] shrink-0 overflow-hidden border-r border-[#ccc] pl-[3px] text-black " + CALIBRI}><div className="-mt-[4px]">{PEEK[c]}</div></div>)}
        </div>
      </div>
      <div className="flex w-[16px] flex-col items-center border-l border-[#999] bg-[#f6f6f6]">
        <div className="flex h-[12px] w-full flex-col items-center justify-center gap-[3px] border-b border-[#999] bg-[#efefef]"><i className="h-px w-[9px] bg-[#888]" /><i className="h-px w-[9px] bg-[#888]" /></div>
        <div className="mt-[3px] h-[263px] w-[9px] rounded-full bg-[#c1c1c1]" />
      </div>
    </div>
  );
}

const RowHead = ({ n }) => (
  <div className={"flex h-[80px] w-[40px] shrink-0 items-end justify-center border-r border-b border-[#999] leading-[22px] " + HEAD + (n === 3 ? " border-[#777] bg-[#989898] text-white [text-shadow:0_0_1px_#555]" : " bg-[#dadada] text-[#666]")}>{n}</div>
);

const Row = ({ n, data }) => (
  <div className="flex h-[80px] shrink-0">
    <RowHead n={n} />
    {COLS.map((c) => (
      <div key={c} className="relative h-[80px] w-[74px] shrink-0">
        <div className={"flex h-full flex-col justify-end overflow-hidden whitespace-nowrap border-r border-b border-[#ccc] pl-[3px] text-black " + cellFont(c, n)}>
          {data[c] && <Lines text={data[c]} />}
        </div>
        {c === "G" && n === 3 && (
          <div className="absolute -inset-x-px -top-px bottom-0 z-10 border-2 border-[#3a62b8]"><div className="absolute -right-[4px] -bottom-[4px] h-[7px] w-[7px] border border-[#3a62b8] bg-[#a9c1ec] outline outline-white" /></div>
        )}
      </div>
    ))}
    <div className="flex-1 border-b border-[#ccc]" />
  </div>
);

function Bottom() {
  const widths = ["w-[36px]", "w-[33px]", "w-[28px]"];
  return (
    <div className="flex h-[35px] bg-[#ececec]">
      <div className="flex w-[66px] shrink-0 items-center border-t border-r border-[#999] bg-[#e9e9e9] pb-[2px] pl-[3px]">
        <div className="flex h-[24px] w-[59px] overflow-hidden rounded-[4px] border border-[#666] bg-gradient-to-b from-white to-[#d8d8d8]">
          <div className="flex w-[29px] items-center justify-center bg-[#5b5b5b]"><Pic className="h-[12px] w-[16px]" box="0 0 16 12"><path d="M0 0h16v12H0z" fill="#8cbcf0" /><path d="M0 3h16M0 6h16M0 9h16M4 0v12M8 0v12M12 0v12" stroke="#2c5690" /></Pic></div>
          <div className="flex flex-1 items-center justify-center gap-[2px]">
            {[0, 1].map((i) => <Pic key={i} className="h-[13px] w-[9px]" box="0 0 9 13"><path d="M.5.5h8v12h-8z" fill="#fff" stroke="#333" /><path d="M3 2v9M6 2v9" stroke="#333" strokeWidth="1.500" strokeDasharray="2 1.500" /></Pic>)}
          </div>
        </div>
      </div>
      <div className="flex flex-1 flex-col">
        <div className="flex h-[17px] border-y border-[#8a8a8a] bg-[#98a3b8]">
          <div className="flex w-[66px] items-center justify-around bg-[#ededed] px-[4px]">
            {["M1 0v8M9 0L3 4l6 4z", "M8 0L2 4l6 4z", "M2 0l6 4-6 4z", "M1 0l6 4-6 4zM9 0v8"].map((d) => <Pic key={d} className="h-[7px] w-[10px]" box="0 0 10 8"><path d={d} fill="#999" stroke="#999" /></Pic>)}
          </div>
          <div className="ml-[12px] h-[14px] w-[52px] rounded-b-[5px] border border-t-0 border-[#666] bg-white text-center text-[11px] font-bold leading-[12px] tracking-[-0.3px] text-black">Sheet1</div>
          <div className="flex h-[14px] w-[22px] items-center justify-center rounded-b-[6px] border border-t-0 border-[#666] bg-[#d5d8dc]"><Pic className="h-[8px] w-[8px]" box="0 0 8 8"><path d="M4 0v8M0 4h8" stroke="#444" strokeWidth="2" /></Pic></div>
          <div className="ml-auto w-[4px] border-l border-[#777] bg-[#ccc]" />
          <div className="flex w-[895px] items-center bg-gradient-to-b from-[#efefef] to-[#fcfcfc] pl-[3px]"><div className="h-[8px] w-[20px] rounded-full bg-[#c1c1c1]" /></div>
          <div className="flex w-[12px] items-center justify-center gap-[2px] border-x border-[#999] bg-[#f5f5f5]"><i className="h-[9px] w-px bg-[#888]" /><i className="h-[9px] w-px bg-[#888]" /></div>
          <div className="w-[15px] bg-white" />
        </div>
        <div className="flex h-[17px] bg-gradient-to-b from-[#f6f6f6] to-[#dedfe1] text-[10.5px] leading-[17px] text-black">
          <div className="w-[92px] border-r border-[#999] pl-[3px] tracking-[-0.1px]">Normal View</div>
          <div className="w-[377px] border-r border-[#999] pl-[6px]">Ready</div>
          <div className="w-[158px] border-r border-[#999]" />
          <div className="flex w-[139px] items-center border-r border-[#999] pl-[3px]">Sum=0<Pic className="ml-auto mr-[5px] h-[6px] w-[9px]" box="0 0 9 6"><path d="M0 0h9L4.500 6z" fill="#000" /></Pic></div>
          {widths.map((w) => <div key={w} className={"border-r border-[#999] " + w} />)}
          <Pic className="ml-auto h-[17px] w-[12px]" box="0 0 12 17"><path d="M1 16L12 5M5 16l7-7M9 16l3-3" stroke="#777" /></Pic>
        </div>
        <div className="h-px bg-black" />
      </div>
    </div>
  );
}

export default function App() {
  return (
    <div className="h-[1109px] w-[1920px] overflow-hidden bg-black font-['Noto_Sans',sans-serif]">
      <div className="h-px bg-[#b9b2aa]" />
      <div className="h-[55px] rounded-t-[5px] border-t border-[#555] border-b border-b-[#6a6a6a] bg-gradient-to-b from-[#e8e8e8] to-[#b0b0b0]">
        <div className="flex h-[22px] items-center">
          <div className="flex w-[913px] gap-[8px] pl-[8px]">
            <i className="h-[12px] w-[12px] rounded-full border border-[#8d2a28] bg-radial-[at_50%_75%] from-[#ffb0a8] to-[#d0333a]" />
            <i className="h-[12px] w-[12px] rounded-full border border-[#9a6a24] bg-radial-[at_50%_75%] from-[#ffe9a0] to-[#e09c35]" />
            <i className="h-[12px] w-[12px] rounded-full border border-[#437a34] bg-radial-[at_50%_75%] from-[#d5f8b0] to-[#6cb348]" />
          </div>
          <Pic className="h-[15px] w-[12px]" box="0 0 12 15"><path d="M.5.5h8l3 3v11H.5z" fill="#fff" stroke="#999" /><path d="M0 0h9v4H0z" fill="#55a855" /><path d="M1 6.500h10M1 9h10M1 11.500h10M4 4v10M8 4v10" stroke="#b7c8b7" /></Pic>
          <div className="ml-[6px] text-[13px] leading-[20px] tracking-[0.1px] text-[#444]">services.xlsx</div>
        </div>
        <Toolbar />
      </div>
      <Tabs />
      <Ribbon />
      <FormulaBar />
      <div className="h-[2px] bg-[#e4e4e4]" />
      <Sheet />
      <Bottom />
    </div>
  );
}
